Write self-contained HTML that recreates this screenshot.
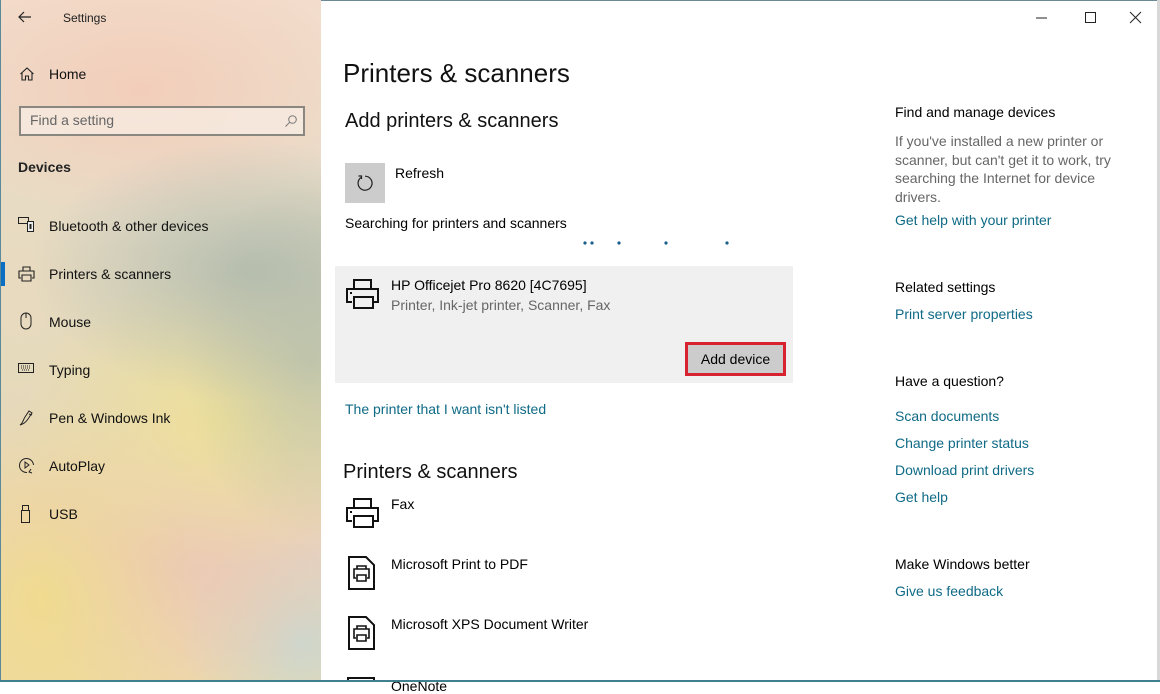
<!DOCTYPE html>
<html><head><meta charset="utf-8"><style>
*{margin:0;padding:0;box-sizing:border-box}
body{width:1160px;height:682px;overflow:hidden;font-family:"Liberation Sans",sans-serif;color:#000;background:#fff;position:relative;font-size:14px}
.side{position:absolute;left:0;top:0;width:321px;height:682px;border-left:1px solid #5a8a9a;
background:
radial-gradient(ellipse 220px 130px at 250px 270px,rgba(175,185,170,.85),rgba(175,185,170,0)),
radial-gradient(ellipse 130px 180px at 310px 360px,rgba(180,190,170,.7),rgba(180,190,170,0)),
radial-gradient(ellipse 200px 150px at 220px 420px,rgba(240,225,150,.9),rgba(240,225,150,0)),
radial-gradient(ellipse 160px 200px at 40px 600px,rgba(240,220,140,.9),rgba(240,220,140,0)),
radial-gradient(ellipse 200px 140px at 170px 560px,rgba(235,200,180,.9),rgba(235,200,180,0)),
radial-gradient(ellipse 120px 120px at 300px 640px,rgba(200,215,210,.9),rgba(200,215,210,0)),
radial-gradient(ellipse 220px 130px at 140px 90px,rgba(242,205,185,.95),rgba(242,205,185,0)),
radial-gradient(ellipse 150px 200px at 20px 300px,rgba(232,218,190,.9),rgba(232,218,190,0)),
linear-gradient(180deg,#f3dccb 0%,#e6dcc8 35%,#e2d9b8 55%,#ecd2bd 80%,#efd8a8 100%)}
.abs{position:absolute;white-space:nowrap}
.nav{position:absolute;left:48px;font-size:14px;color:#111}
.link{color:#0f6a86}
.gray{color:#666}
</style></head><body>
<div class="side">
 <svg class="abs" style="left:16px;top:9px" width="16" height="16" viewBox="0 0 16 16"><path d="M14 8H2M7 3L2 8l5 5" stroke="#222" stroke-width="1.2" fill="none"/></svg>
 <div class="abs" style="left:62px;top:11px;font-size:12px;color:#222">Settings</div>
 <svg class="abs" style="left:18px;top:66px" width="16" height="16" viewBox="0 0 16 16"><path d="M1.5 8L8 2l6.5 6M3 7v7h3.5V10h3v4H13V7" stroke="#222" stroke-width="1.1" fill="none"/></svg>
 <div class="nav" style="top:66px;left:48px">Home</div>
 <div class="abs" style="left:18px;top:106px;width:286px;height:30px;border:2px solid #8a8680;background:rgba(248,238,230,.7)"></div>
 <div class="abs" style="left:29px;top:112px;color:#666">Find a setting</div>
 <svg class="abs" style="left:283px;top:114px" width="14" height="14" viewBox="0 0 14 14"><circle cx="8.5" cy="5.5" r="3.8" stroke="#777" fill="none"/><path d="M5.8 8.2L1.5 12.5" stroke="#777"/></svg>
 <div class="abs" style="left:17px;top:159px;font-weight:bold;color:#222">Devices</div>
 <svg class="abs" style="left:17px;top:217px" width="17" height="16" viewBox="0 0 17 16"><rect x="0.5" y="0.5" width="10" height="6" stroke="#222" fill="none"/><rect x="9.5" y="4.5" width="6" height="10" stroke="#222" fill="#eee"/><rect x="11.5" y="7" width="2" height="5" fill="#222"/></svg>
 <div class="nav" style="top:218px">Bluetooth &amp; other devices</div>
 <div class="abs" style="left:0;top:262px;width:4px;height:24px;background:#0a6fc2"></div>
 <svg class="abs" style="left:17px;top:266px" width="17" height="16" viewBox="0 0 17 16"><path d="M5 5V1h7v4M3 12H1V5h15v7h-2M4 9h9v6H4z" stroke="#222" stroke-width="1.1" fill="none"/></svg>
 <div class="nav" style="top:266px">Printers &amp; scanners</div>
 <svg class="abs" style="left:19px;top:312px" width="12" height="18" viewBox="0 0 12 18"><rect x="1" y="1" width="10" height="16" rx="5" stroke="#222" fill="none"/><path d="M6 1v5" stroke="#222"/></svg>
 <div class="nav" style="top:314px">Mouse</div>
 <svg class="abs" style="left:17px;top:363px" width="16" height="10" viewBox="0 0 16 10"><rect x=".5" y=".5" width="15" height="9" stroke="#222" fill="none"/><path d="M3 3h10M3 5h10M4 7h8" stroke="#222" stroke-dasharray="1 1"/></svg>
 <div class="nav" style="top:362px">Typing</div>
 <svg class="abs" style="left:17px;top:409px" width="17" height="17" viewBox="0 0 17 17"><path d="M2 16c3-2 3-5 5-8l4-6 3 2-4 6c-2 3-4 5-8 6zM11 5l3 1" stroke="#222" fill="none"/></svg>
 <div class="nav" style="top:410px">Pen &amp; Windows Ink</div>
 <svg class="abs" style="left:17px;top:457px" width="17" height="17" viewBox="0 0 17 17"><path d="M9 15.5A7 7 0 1 1 15.5 8" stroke="#222" fill="none"/><path d="M7 5v6l4-3z" stroke="#222" fill="none"/><path d="M13 12l-2 3 3 1" stroke="#222" fill="none"/></svg>
 <div class="nav" style="top:458px">AutoPlay</div>
 <svg class="abs" style="left:19px;top:505px" width="12" height="18" viewBox="0 0 12 18"><rect x="1.5" y="5.5" width="8" height="12" stroke="#222" fill="none"/><rect x="2.5" y=".5" width="6" height="5" stroke="#222" fill="none"/></svg>
 <div class="nav" style="top:506px">USB</div>
</div>
<div class="abs" style="left:321px;top:0;width:839px;height:1px;background:#6a8a95"></div>
<div class="abs" style="left:1157px;top:0;width:3px;height:682px;background:#d8d8d8"></div>
<svg class="abs" style="left:1036px;top:10px" width="110" height="16" viewBox="0 0 110 16"><path d="M0 8h11" stroke="#222"/><rect x="49.5" y="2.5" width="10" height="10" stroke="#222" fill="none"/><path d="M94 2l11 11M105 2L94 13" stroke="#222"/></svg>

<div class="abs" style="left:343px;top:58px;font-size:26px;color:#111">Printers &amp; scanners</div>
<div class="abs" style="left:345px;top:110px;font-size:20px;color:#111">Add printers &amp; scanners</div>
<div class="abs" style="left:345px;top:163px;width:40px;height:40px;background:#ccc"></div>
<svg class="abs" style="left:355px;top:173px" width="20" height="20" viewBox="0 0 20 20"><path d="M6 4.5A7 7 0 1 0 10 3.2" stroke="#222" stroke-width="1.2" fill="none"/><path d="M3.5 3h3v3" stroke="#222" stroke-width="1.2" fill="none"/></svg>
<div class="abs" style="left:395px;top:165px">Refresh</div>
<div class="abs" style="left:345px;top:215px">Searching for printers and scanners</div>
<svg class="abs" style="left:580px;top:238px" width="160" height="10"><g fill="#1a5f8a"><circle cx="5" cy="5" r="1.6"/><circle cx="12" cy="5" r="1.6"/><circle cx="39" cy="5" r="1.6"/><circle cx="86" cy="5" r="1.6"/><circle cx="147" cy="5" r="1.6"/></g></svg>
<div class="abs" style="left:335px;top:266px;width:458px;height:117px;background:#f0f0f0"></div>
<svg class="abs" style="left:346px;top:278px" width="34" height="32" viewBox="0 0 34 32"><path d="M8 11V2h17v9M6 24H1V11h31v13h-5M8 19h19v11H8z" stroke="#111" stroke-width="2" fill="none"/><rect x="4" y="14" width="2" height="2" fill="#111"/></svg>
<div class="abs" style="left:391px;top:277px">HP Officejet Pro 8620 [4C7695]</div>
<div class="abs gray" style="left:391px;top:297px">Printer, Ink-jet printer, Scanner, Fax</div>
<div class="abs" style="left:685px;top:342px;width:101px;height:34px;border:3px solid #d6232f;background:#ccc;text-align:center;line-height:28px">Add device</div>
<div class="abs link" style="left:345px;top:401px">The printer that I want isn't listed</div>
<div class="abs" style="left:343px;top:461px;font-size:20px;color:#111">Printers &amp; scanners</div>
<svg class="abs" style="left:346px;top:497px" width="34" height="32" viewBox="0 0 34 32"><path d="M8 11V2h17v9M6 24H1V11h31v13h-5M8 19h19v11H8z" stroke="#111" stroke-width="2" fill="none"/><rect x="4" y="14" width="2" height="2" fill="#111"/></svg>
<div class="abs" style="left:391px;top:496px">Fax</div>
<svg class="abs" style="left:348px;top:556px" width="28" height="34" viewBox="0 0 28 34"><path d="M1 1h17l8 8v24H1z" stroke="#111" stroke-width="2" fill="none"/><path d="M9 13v-3h9v3M8 22H6v-9h15v9h-2M9 19h9v6H9z" stroke="#111" stroke-width="1.6" fill="none"/></svg>
<div class="abs" style="left:391px;top:556px">Microsoft Print to PDF</div>
<svg class="abs" style="left:348px;top:616px" width="28" height="34" viewBox="0 0 28 34"><path d="M1 1h17l8 8v24H1z" stroke="#111" stroke-width="2" fill="none"/><path d="M9 13v-3h9v3M8 22H6v-9h15v9h-2M9 19h9v6H9z" stroke="#111" stroke-width="1.6" fill="none"/></svg>
<div class="abs" style="left:391px;top:616px">Microsoft XPS Document Writer</div>
<div class="abs" style="left:347px;top:677px;width:28px;height:4px;border:2px solid #111;border-bottom:none"></div>
<div class="abs" style="left:391px;top:678px">OneNote</div>
<div class="abs" style="left:0;top:680px;width:1160px;height:2px;background:#3f7f8f"></div>

<div class="abs" style="left:895px;top:104px;font-size:14px">Find and manage devices</div>
<div class="abs gray" style="left:895px;top:132px;line-height:18.5px;white-space:normal;width:230px">If you've installed a new printer or scanner, but can't get it to work, try searching the Internet for device drivers.</div>
<div class="abs link" style="left:895px;top:212px">Get help with your printer</div>
<div class="abs" style="left:895px;top:279px">Related settings</div>
<div class="abs link" style="left:895px;top:306px">Print server properties</div>
<div class="abs" style="left:895px;top:373px">Have a question?</div>
<div class="abs link" style="left:895px;top:408px">Scan documents</div>
<div class="abs link" style="left:895px;top:435px">Change printer status</div>
<div class="abs link" style="left:895px;top:462px">Download print drivers</div>
<div class="abs link" style="left:895px;top:489px">Get help</div>
<div class="abs" style="left:895px;top:556px">Make Windows better</div>
<div class="abs link" style="left:895px;top:583px">Give us feedback</div>
</body></html>
